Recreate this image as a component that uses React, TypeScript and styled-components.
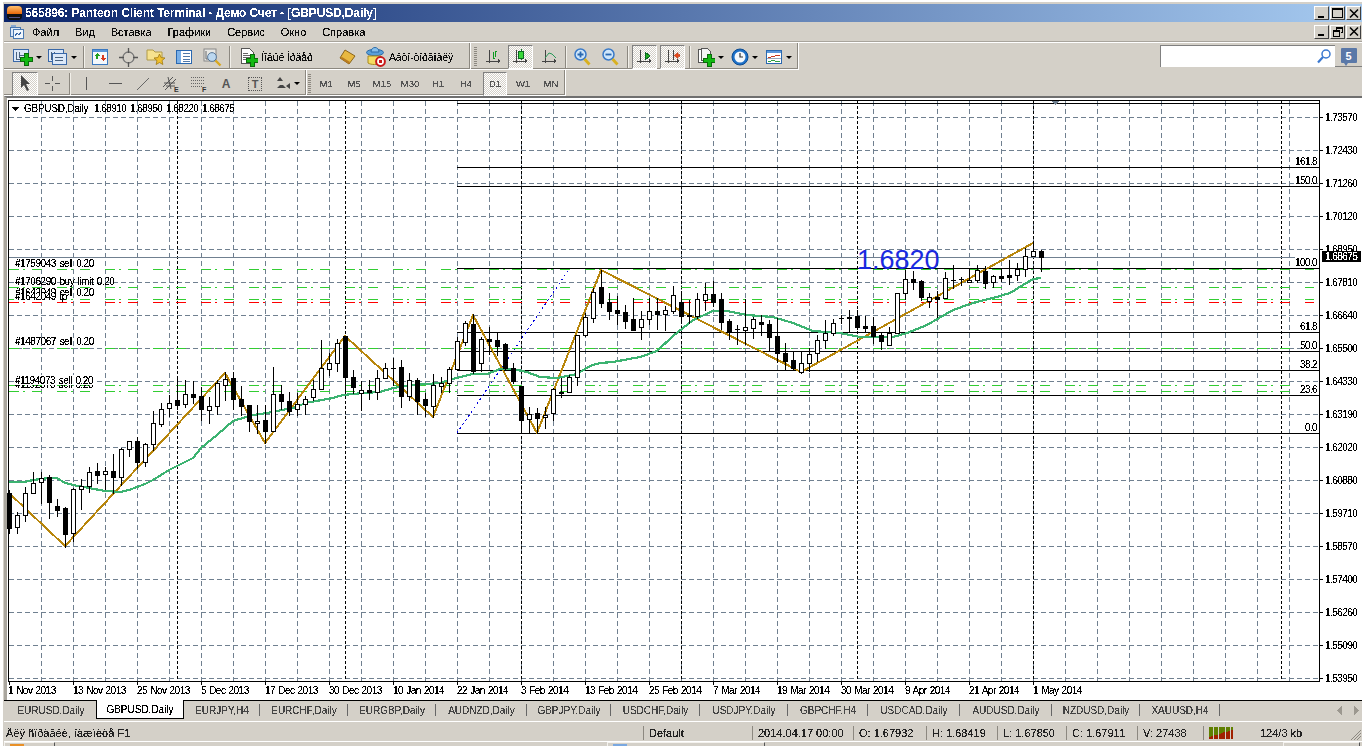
import React from "react";
import styled, { createGlobalStyle, css } from "styled-components";

const UI_FONT = `"Liberation Sans", Arial, sans-serif`;
const CHART_FONT = `"Liberation Sans", Arial, sans-serif`;
const crisp = css` filter: url(#crisp); `;

const Global = createGlobalStyle`
  html, body { margin: 0; padding: 0; background: #fff; width: 1368px; height: 746px; overflow: hidden; }
  * { box-sizing: border-box; }
`;

const Win = styled.div`
  margin: 2px 0 0 3px; width: 1359px; height: 744px; display: flex; flex-direction: column;
  background: #d4d0c8; border-left: 1px solid #d4d0c8; border-top: 2px solid #d4d0c8;
  font: 11px ${UI_FONT}; color: #000; overflow: hidden;
`;
const HiddenDefs = styled.svg` position: absolute; width: 0; height: 0; `;
const TitleBar = styled.div`
  height: 18px; flex: none; display: flex; align-items: center;
  background: linear-gradient(90deg, #0a246a, #a6caf0);
  color: #fff; font: bold 12px ${UI_FONT}; padding-left: 3px;
`;
const TitleText = styled.span` margin-left: 3px; white-space: nowrap; letter-spacing: -.12px; filter: url(#crispBold); `;
const WinBtns = styled.div` margin-left: auto; display: flex; gap: 1px; padding-right: 1px; `;
const WinBtn = styled.div`
  width: 15px; height: 14px; background: #d4d0c8; display: flex; align-items: center; justify-content: center;
  border-style: solid; border-width: 1px; border-color: #fff #404040 #404040 #fff;
`;
const MenuRow = styled.div`
  height: 20px; flex: none; display: flex; align-items: center; padding-left: 6px;
  border-bottom: 1px solid #a8a49c;
`;
const MenuItems = styled.div` display: flex; gap: 15.9px; margin-left: 8px; color: #111; ${crisp} `;
const MenuItem = styled.span``;
const Rows = styled.div` flex: none; border-top: 1px solid #fff; `;
const TRow = styled.div<{ $h: number }>`
  height: ${p => p.$h}px; display: flex; align-items: center; position: relative;
`;
const Band = styled.div<{ $w: number; $pl: number }>`
  width: ${p => p.$w}px; height: 100%; flex: none; display: flex; align-items: center; padding: 2px 0 0 ${p => p.$pl}px;
  border-right: 1px solid #fff; border-bottom: 1px solid #fff; box-shadow: inset -1px -1px 0 #8c8880;
`;
const activeCss = css`
  background: repeating-conic-gradient(#fff 0 25%, #d4d0c8 0 50%) 0 0 / 2px 2px;
  border-style: solid; border-width: 1px; border-color: #808080 #fff #fff #808080;
`;
const Tool = styled.div<{ $w: number; $ml?: number; $active?: boolean }>`
  width: ${p => p.$w}px; margin-left: ${p => p.$ml ?? 0}px; height: 24px; flex: none;
  display: flex; align-items: center; justify-content: center; gap: 3px;
  color: #111; white-space: nowrap;
  ${p => p.$active && activeCss}
`;
const TfLabel = styled.span` font: 9.5px ${UI_FONT}; color: #555; ${crisp} `;
const Caret = styled.i`
  width: 0; height: 0; border: 3px solid transparent; border-top: 3px solid #000; border-bottom: 0; display: block; flex: none;
`;
const Sep = styled.i<{ $ml: number; $mr: number }>`
  width: 2px; height: 22px; flex: none; margin: 0 ${p => p.$mr}px 0 ${p => p.$ml}px;
  border-left: 1px solid #8c8880; border-right: 1px solid #f2f0ea;
`;
const Grip = styled.i<{ $ml: number; $mr: number }>`
  width: 3px; height: 20px; flex: none; margin: 0 ${p => p.$mr}px 0 ${p => p.$ml}px;
  background: repeating-linear-gradient(180deg, #8c8880 0 1px, #d4d0c8 1px 2px);
`;
const GarbledLabel = styled.span` font: 10.5px ${UI_FONT}; letter-spacing: -.1px; ${crisp} `;
const Search = styled.div`
  position: absolute; right: 0; top: 2px; display: flex; width: 202px; height: 22px;
`;
const SearchField = styled.div`
  flex: 1; background: #fff; display: flex; align-items: center; justify-content: flex-end; padding-right: 4px;
  border-left: 1px solid #808080; border-top: 1px solid #808080;
`;
const SearchBtn = styled.div`
  width: 27px; display: flex; align-items: center; justify-content: center; border-bottom: 1px solid #808080;
`;
const ChartBox = styled.div`
  height: 604px; flex: none; display: flex; background: #fff; border-top: 2px solid #6f6f6f; border-left: 3px solid #aaa69e;
`;
const ChartSvg = styled.svg` display: block; background: #fff; `;
const CT = styled.text<{ $ls?: number; $ws?: number }>`
  font: 10px ${CHART_FONT}; fill: #000; letter-spacing: ${p => p.$ls ?? 0}px; word-spacing: ${p => p.$ws ?? 0}px; ${crisp}
`;
const BigLevel = styled.text` font: 27px ${UI_FONT}; fill: #1a2ae0; `;
const TabsRow = styled.div`
  height: 22px; flex: none; display: flex; padding-left: 2px; border-top: 1px solid #000; border-bottom: 1px solid #fff; position: relative;
`;
const Tab = styled.div<{ $w: number; $active?: boolean; $first?: boolean }>`
  width: ${p => p.$w}px; flex: none; display: flex; align-items: center; justify-content: center; font: 10px ${UI_FONT};
  color: #444; height: 18px; position: relative;
  ${p => p.$active ? css`
    background: #fff; color: #000; height: 19px; margin-top: -1px; padding-top: 1px;
    border-left: 1px solid #000; border-right: 1px solid #000; border-bottom: 1px solid #000;
  ` : css`
    &::after { content: ""; position: absolute; right: 0; top: 3px; height: 12px; width: 1px; background: ${p.$first ? "transparent" : "#666"}; }
  `}
`;
const TabLabel = styled.span` ${crisp} `;
const TabArrows = styled.div`
  position: absolute; right: 2px; top: 5px; display: flex; gap: 11px;
`;
const StatusRow = styled.div` height: 19px; flex: none; display: flex; align-items: center; padding-top: 3px; color: #222; `;
const Cell = styled.div<{ $w: number; $sep?: boolean }>`
  width: ${p => p.$w}px; flex: none; height: 14px; display: flex; align-items: center; white-space: nowrap; padding-left: ${p => p.$sep ? 5 : 2}px;
  ${p => p.$sep && "border-left: 1px solid #8c8880;"}
`;
const CellText = styled.span` ${crisp} `;
const Grow = styled.div` flex: 1; display: flex; justify-content: flex-end; align-self: flex-end; `;
const Taskbar = styled.div`
  flex: 1; display: flex; border-top: 1px solid #fff; align-items: stretch;
`;
const TaskBtn = styled.div<{ $w: number; $ml: number }>`
  width: ${p => p.$w}px; margin-left: ${p => p.$ml}px; flex: none; background: #d4d0c8; padding: 1px 0 0 5px;
  border-left: 1px solid #f4f2ee; border-top: 1px solid #f4f2ee; border-right: 1px solid #555;
`;
const TaskIcon = styled.i<{ $c: string }>` display: block; width: 14px; height: 4px; background: ${p => p.$c}; `;

/* ---------- icons ---------- */
const Svg: React.FC<{ w: number; h: number; children: React.ReactNode }> = ({ w, h, children }) => (
  <svg width={w} height={h} viewBox={`0 0 ${w} ${h}`} style={{ display: "block", flex: "none" }} shapeRendering="crispEdges">{children}</svg>
);
const Plus = ({ x, y }: { x: number; y: number }) => (
  <path d={`M${x + 4} ${y}h4v4h4v4h-4v4h-4v-4h-4v-4h4z`} fill="#12b812" stroke="#0a6a0a" />
);
const ChartWin = ({ x = 0, y = 0 }: { x?: number; y?: number }) => (
  <g transform={`translate(${x} ${y})`}>
    <rect x=".5" y=".5" width="15" height="12" fill="#dce8f8" stroke="#3a68a8" />
    <path d="M3 3v7h10M6 6h5M6 3v6" stroke="#48617f" fill="none" />
  </g>
);
const NewChart = () => <Svg w={20} h={18}><ChartWin y={1} /><Plus x={7} y={5} /></Svg>;
const Profiles = () => (
  <Svg w={20} h={18}>
    <ChartWin y={1} />
    <g transform="translate(4 5)"><rect x=".5" y=".5" width="14" height="11" fill="#dce8f8" stroke="#3a68a8" /><path d="M3 4h8M3 7h8" stroke="#48617f" /></g>
  </Svg>
);
const MarketWatch = () => (
  <Svg w={17} h={17}>
    <rect x=".5" y=".5" width="15" height="15" fill="#f4f8fc" stroke="#3a78c0" /><rect x="1" y="1" width="14" height="2" fill="#5a98dc" />
    <path d="M5 4l3 3h-2v3h-2v-3h-2z" fill="#20a020" /><path d="M11 12l3-3h-2v-3h-2v3h-2z" fill="#d83a20" />
  </Svg>
);
const Navigator = () => (
  <svg width="19" height="19" viewBox="0 0 19 19" style={{ display: "block" }}>
    <circle cx="9.5" cy="9.5" r="5.5" fill="none" stroke="#777" strokeWidth="1.3" />
    <path d="M9.5 0v5M9.5 14v5M0 9.5h5M14 9.5h5" stroke="#555" strokeWidth="1.3" />
  </svg>
);
const FolderStar = () => (
  <svg width="20" height="18" viewBox="0 0 20 18" style={{ display: "block" }}>
    <path d="M1 2h6l2 2h7v8H1z" fill="#f6e28e" stroke="#b09a48" />
    <path d="M13.5 6l1.6 3.6 3.9.4-3 2.6.9 3.9-3.4-2-3.4 2 .9-3.9-3-2.6 3.9-.4z" fill="#f0c030" stroke="#a07810" strokeWidth=".8" />
  </svg>
);
const Terminal = () => (
  <Svg w={17} h={15}>
    <rect x=".5" y=".5" width="15" height="13" fill="#fff" stroke="#2a68b0" /><rect x="1" y="1" width="4" height="12" fill="#7ab0e8" />
    <path d="M7 3h7M7 6h7M7 9h7M7 11h7" stroke="#5078a8" />
  </Svg>
);
const Tester = () => (
  <svg width="19" height="19" viewBox="0 0 19 19" style={{ display: "block" }}>
    <rect x="1" y="1" width="12" height="12" fill="#e8e8e4" stroke="#888" />
    <path d="M3 3v8h8" stroke="#666" fill="none" />
    <circle cx="9" cy="9" r="4.4" fill="#bcd8f0" stroke="#5a7898" />
    <path d="M12.5 12.5l5 5" stroke="#d8a820" strokeWidth="2.4" />
  </svg>
);
const NewOrder = () => (
  <Svg w={18} h={19}>
    <path d="M1.5 .5h8l4 4v11h-12z" fill="#fff" stroke="#555" />
    <path d="M3 5h5M3 7h8M3 9h8M3 11h5" stroke="#666" />
    <Plus x={6} y={6} />
  </Svg>
);
const MetaEditor = () => (
  <svg width="17" height="16" viewBox="0 0 17 16" style={{ display: "block" }}>
    <path d="M6 1l10 6-6 8-9-6z" fill="#e8b840" stroke="#8a6418" />
    <path d="M1 9l9 6 1-2-8-5z" fill="#b87a20" />
  </svg>
);
const AutoTrade = () => (
  <svg width="20" height="20" viewBox="0 0 20 20" style={{ display: "block" }}>
    <ellipse cx="9" cy="5.5" rx="8.5" ry="3.2" fill="#5aa0d8" stroke="#2a6aa8" />
    <path d="M5 5c0-6 8-6 8 0z" fill="#86c0ec" stroke="#2a6aa8" />
    <path d="M2 9h13v7c-3 2-10 2-13 0z" fill="#f4dc60" stroke="#a88a20" />
    <circle cx="14.5" cy="14.5" r="4.4" fill="#fff" stroke="#c81818" strokeWidth="2" />
    <rect x="13" y="13" width="3" height="3" fill="#c81818" />
  </svg>
);
const Axes = () => <path d="M3 1v13M0 12h14M14 12l-2-1.500M14 12l-2 1.500" stroke="#444" fill="none" />;
const BarIcon = () => (
  <Svg w={15} h={16}><Axes /><path d="M7 3v7M7 9h2M9 2v6M9 2h2" stroke="#0a9a20" fill="none" /></Svg>
);
const CandleIcon = () => (
  <Svg w={15} h={16}><Axes /><path d="M8 0v11" stroke="#0a7a20" /><rect x="5.500" y="2.500" width="5" height="7" fill="#38d838" stroke="#0a6a20" /></Svg>
);
const LineIcon = () => (
  <svg width="15" height="16" viewBox="0 0 15 16" style={{ display: "block" }}><g shapeRendering="crispEdges"><Axes /></g><path d="M3 9L7 4l3 1 4 4" stroke="#2a9a5a" fill="none" /></svg>
);
const Magnifier = ({ plus }: { plus?: boolean }) => (
  <svg width="17" height="18" viewBox="0 0 17 18" style={{ display: "block" }}>
    <circle cx="6.500" cy="6.500" r="5.500" fill="#cfe6fa" stroke="#3a7ac8" strokeWidth="1.500" />
    <path d={plus ? "M3.500 6.500h6M6.500 3.500v6" : "M3.500 6.500h6"} stroke="#2a68b0" strokeWidth="1.800" />
    <path d="M10.500 11l5 5.500" stroke="#d8b020" strokeWidth="2.800" />
  </svg>
);
const ShiftIcon = () => (
  <Svg w={15} h={16}><Axes /><path d="M8 3l5 4-5 4z" fill="#20b020" stroke="#0a6a20" /></Svg>
);
const ScrollIcon = () => (
  <svg width="15" height="16" viewBox="0 0 15 16" style={{ display: "block" }}><g shapeRendering="crispEdges"><Axes /><path d="M8 1v10" stroke="#444" /></g><path d="M9 6.500l4-3v2h2v2h-2v2z" fill="#e84818" stroke="#b03010" strokeWidth=".5" /></svg>
);
const TemplateIcon = () => (
  <Svg w={18} h={19}>
    <path d="M1.500 1.500h7l2 2v11h-9z" fill="#fff" stroke="#555" /><path d="M4.500 .5h6l3 3v9h-9z" fill="#f4f4f4" stroke="#555" />
    <Plus x={6} y={6} />
  </Svg>
);
const ClockIcon = () => (
  <svg width="18" height="18" viewBox="0 0 18 18" style={{ display: "block" }}>
    <circle cx="9" cy="9" r="8" fill="#1c70c8" stroke="#0c4a90" />
    <circle cx="9" cy="9" r="5.500" fill="#f4f8fc" />
    <path d="M9 5v4h3" stroke="#333" strokeWidth="1.200" fill="none" />
  </svg>
);
const ListIcon = () => (
  <Svg w={17} h={15}>
    <rect x=".5" y=".5" width="15" height="13" fill="#fff" stroke="#2a68b0" /><rect x="1" y="1" width="14" height="2" fill="#5a98dc" />
    <path d="M2 7h3M5 6h4M9 5h5" stroke="#c83a20" /><path d="M2 11h3M5 10h4M9 11h5" stroke="#30a040" /><path d="M1 8h14" stroke="#9ab" />
  </Svg>
);
const CursorIcon = () => (
  <svg width="11" height="17" viewBox="0 0 11 17" style={{ display: "block" }}><path d="M1 0v13l3-3 3 6 2-1-3-6h4z" fill="#444" /></svg>
);
const CrossIcon = () => <Svg w={15} h={15}><path d="M7.500 0v5M7.500 10v5M0 7.500h5M10 7.500h5" stroke="#555" /></Svg>;
const VLine = () => <Svg w={3} h={13}><path d="M1.500 0v13" stroke="#555" /></Svg>;
const HLine = () => <Svg w={13} h={3}><path d="M0 1.500h13" stroke="#555" /></Svg>;
const Trend = () => <svg width="14" height="14" viewBox="0 0 14 14" style={{ display: "block" }}><path d="M1 13L13 1" stroke="#666" /></svg>;
const ChannelIcon = () => (
  <svg width="16" height="16" viewBox="0 0 16 16" style={{ display: "block" }}>
    <path d="M0 11L10 1M2 14L13 3M5 1l3 12M1 7h11M3 10h9" stroke="#555" fill="none" />
    <text x="11" y="16" fontFamily="Liberation Sans" fontWeight="bold" fontSize="7" fill="#333">E</text>
  </svg>
);
const FiboIcon = () => (
  <svg width="16" height="16" viewBox="0 0 16 16" style={{ display: "block" }} shapeRendering="crispEdges">
    <path d="M0 1.500h14M0 4.500h14M0 7.500h14M0 10.500h11" stroke="#666" strokeDasharray="1 1" />
    <text x="11" y="16" fontFamily="Liberation Sans" fontWeight="bold" fontSize="7" fill="#333">F</text>
  </svg>
);
const BigA = styled.span` font: bold 12px ${UI_FONT}; color: #555; `;
const BoxT = styled.span`
  width: 14px; height: 14px; border: 1px dotted #555; display: flex; align-items: center; justify-content: center;
  font: bold 11px ${UI_FONT}; color: #555;
`;
const ArrowsIcon = () => (
  <svg width="15" height="13" viewBox="0 0 15 13" style={{ display: "block" }}>
    <path d="M4 0l3 4H1zM10 9l4-3v6zM4 8h3l3 3H1" fill="#444" />
  </svg>
);
const TitleLogo = () => (
  <svg width="15" height="16" viewBox="0 0 15 16" style={{ display: "block" }}>
    <defs><linearGradient id="tl" x1="0" y1="0" x2="0" y2="1"><stop offset="0" stopColor="#ffc070" /><stop offset="1" stopColor="#e86808" /></linearGradient></defs>
    <rect x="0" y="1" width="15" height="14" rx="4" fill="#111" /><path d="M0 5a4 4 0 014-4h7a4 4 0 014 4v4H0z" fill="url(#tl)" />
    <rect x="2" y="12" width="11" height="1" fill="#558" />
  </svg>
);
const MenuLogo = () => (
  <Svg w={14} h={14}>
    <rect x=".5" y="2.500" width="10" height="9" fill="#dce8f8" stroke="#4a78b0" />
    <rect x="3.500" y="4.500" width="10" height="9" fill="#f0f6fc" stroke="#4a78b0" />
    <path d="M5 11l2-3 2 2 2-3" stroke="#3a68a8" fill="none" /><rect x="1" y="0" width="5" height="2" fill="#88a8d0" />
  </Svg>
);
const GMin = () => <Svg w={9} h={9}><path d="M1 7h6v2H1z" fill="#000" /></Svg>;
const GMax = () => <Svg w={11} h={10}><path d="M.5 .5h10v9H.5zM1 1.500h9" stroke="#000" fill="none" /></Svg>;
const GClose = () => <svg width="10" height="9" viewBox="0 0 10 9" style={{ display: "block" }}><path d="M1 .5l8 8M9 .5l-8 8" stroke="#000" strokeWidth="1.500" /></svg>;
const GRestore = () => <Svg w={10} h={10}><path d="M3.500 2.500v-2h6v5h-2M.5 3.500h6v6h-6zM.5 4.500h6M3.500 1.500h6" stroke="#000" fill="none" /></Svg>;
const SearchGlass = () => (
  <svg width="14" height="15" viewBox="0 0 14 15" style={{ display: "block" }}>
    <circle cx="9" cy="5" r="4" fill="#fff" stroke="#3a78d0" strokeWidth="1.500" /><path d="M6 8l-5 5.500" stroke="#3a78d0" strokeWidth="2.200" />
  </svg>
);
const Bubble = styled.div`
  width: 16px; height: 15px; background: #5a78a8; color: #fff; font: bold 11px ${UI_FONT};
  display: flex; align-items: center; justify-content: center; position: relative; border-radius: 1px;
  &::after { content: ""; position: absolute; left: 3px; bottom: -3px; border: 2px solid transparent; border-top: 3px solid #5a78a8; border-bottom: 0; }
`;
const LoadBars = () => (
  <Svg w={24} h={12}>
    {Array.from({ length: 10 }, (_, i) => {
      const x = Math.round(i * 2.4);
      const red = 1 + Math.round(i * .75);
      return (
        <g key={i}>
          <rect x={x} y={0} width={2} height={11 - red} fill="#5f7f00" />
          <rect x={x} y={11 - red} width={2} height={red + 1} fill="#a02000" />
        </g>
      );
    })}
  </Svg>
);

/* ---------- chart data (page pixel coordinates) ---------- */
// [high, low, bodyTop, bodyBottom, white?]
const C: number[][] = [
  [490,533,493,528,0],[512,533,515,527,1],[487,521,493,515,1],[472,493,483,493,1],[472,503,478,482,1],[475,518,477,502,0],[499,516,506,510,0],[507,547,508,534,0],
  [488,541,489,533,1],[479,509,486,489,1],[467,492,472,486,1],[463,483,471,475,0],[467,489,471,474,1],[454,493,471,477,0],[448,485,449,477,1],[441,456,441,449,1],
  [437,468,441,462,0],[443,466,444,462,1],[411,450,423,444,1],[403,426,409,424,1],[395,416,403,408,1],[376,409,400,405,0],[380,407,394,404,1],[381,403,394,397,0],
  [387,420,396,409,0],[397,423,406,410,1],[380,414,383,406,1],[372,400,379,385,1],[372,409,378,399,0],[386,415,399,406,0],[405,431,405,421,0],[405,433,421,423,1],
  [405,443,420,431,0],[367,431,394,431,1],[385,409,394,401,0],[392,415,401,411,0],[393,415,404,409,1],[396,414,399,404,1],[380,400,389,397,1],[340,389,368,389,1],
  [353,375,363,369,1],[339,371,343,363,1],[336,392,336,377,0],[370,393,377,387,0],[381,410,390,393,1],[380,399,390,392,0],[370,399,378,392,1],[363,378,368,378,1],
  [358,385,368,368,0],[360,407,367,396,0],[373,400,380,396,1],[378,414,380,401,0],[393,416,399,405,0],[374,417,385,406,1],[377,392,383,386,1],[367,392,369,383,1],
  [337,370,341,369,1],[321,345,323,342,1],[314,373,324,371,0],[337,371,339,363,1],[327,354,339,341,0],[333,355,340,346,0],[343,369,344,368,0],[363,383,368,381,0],
  [386,433,386,420,0],[407,433,414,419,1],[408,433,413,418,0],[407,428,415,417,1],[388,420,389,413,1],[378,397,392,393,0],[375,392,377,392,1],[335,385,335,377,1],
  [313,336,317,335,1],[288,322,292,318,1],[270,307,287,303,0],[293,319,302,311,0],[296,324,310,313,0],[305,328,312,321,0],[298,330,319,330,0],[311,339,319,327,1],
  [298,324,311,319,1],[298,329,311,314,0],[306,330,310,314,1],[286,313,295,311,1],[292,320,302,316,0],[300,323,315,316,0],[293,318,299,316,1],[283,310,294,300,1],
  [281,306,294,302,0],[293,329,299,322,0],[319,339,321,331,0],[325,344,329,329,0],[299,344,327,330,1],[317,338,319,328,1],[315,335,322,324,0],[320,350,324,337,0],
  [318,362,336,353,0],[343,369,353,361,0],[352,370,360,368,0],[352,373,363,372,1],[348,371,354,363,1],[335,361,340,353,1],[320,348,333,340,1],[319,335,323,333,1],
  [315,323,318,318,0],[310,332,317,318,0],[310,329,316,327,0],[316,332,326,328,0],[317,343,326,336,0],[333,349,335,341,0],[327,345,333,345,1],[293,333,293,333,1],
  [270,299,279,293,1],[271,289,279,282,0],[280,300,281,297,0],[293,307,297,301,1],[291,317,297,299,0],[272,298,278,298,1],[265,288,280,280,0],[277,285,279,279,0],
  [269,282,280,282,1],[265,282,270,280,1],[266,288,271,283,0],[275,287,276,282,1],[268,281,276,278,0],[260,284,275,277,0],[263,280,269,275,1],[248,276,256,269,1],
  [243,256,251,256,1],[250,271,251,257,0],
];
const ZIG = "9,493 65,546 225,373 265,443 345,336 433,417 473,315 537,433 601,270 801,372 1033,243";
const MA = "9,482 25,482 33,480 49,478 57,478 65,483 73,485 89,488 105,491 121,492 129,490 145,484 153,480 169,470 185,462 193,458 201,448 217,435 233,421 253,415 267,413 297,407 305,403 333,398 343,395 363,393 380,392 393,388 413,385 440,383 460,377 473,374 487,374 500,369 513,369 527,372 540,377 557,378 577,374 590,366 600,363 613,362 640,357 657,351 673,336 693,320 713,311 727,311 747,315 773,317 793,323 813,331 840,333 860,337 893,337 907,333 927,325 953,310 973,303 993,298 1010,293 1023,285 1033,279 1041,278";
const PRICES = ["1.73570","1.72430","1.71260","1.70120","1.68950","1.67810","1.66640","1.65500","1.64330","1.63190","1.62020","1.60880","1.59710","1.58570","1.57400","1.56260","1.55090","1.53950"];
const DATES = ["1 Nov 2013","13 Nov 2013","25 Nov 2013","5 Dec 2013","17 Dec 2013","30 Dec 2013","10 Jan 2014","22 Jan 2014","3 Feb 2014","13 Feb 2014","25 Feb 2014","7 Mar 2014","19 Mar 2014","30 Mar 2014","9 Apr 2014","21 Apr 2014","1 May 2014"];
const SEPS = [177, 345, 521, 681, 857, 1033, 1281];
const FIBS: [number, string, number][] = [[167,"161.8",165],[186,"150.0",184],[268,"100.0",266],[332,"61.8",330],[351,"50.0",349],[370,"38.2",368],[395,"23.6",393],[433,"0.0",431]];
const ORDERS: [number, string, number][] = [[269,"#32cd32",1314],[287,"#32cd32",1314],[299,"#32cd32",1314],[302,"#ff0000",1314],[348,"#32cd32",1298],[385,"#32cd32",1298],[391,"#32cd32",1298]];
const LEFT: [string, number][] = [["#1759043 sell 0.20",267],["#1706290 buy limit 0.20",285],["#1642049 sell 0.20",296],["#1487067 sell 0.20",345],["#1192370 sell 0.20",388]];
const HEAD: [string, number, number][] = [["GBPUSD,Daily",24,-.25],["1.68910",94,-.55],["1.68950",130,-.55],["1.68220",166,-.55],["1.68675",202,-.55]];

const Chart = () => {
  const gridY = PRICES.map((_, i) => 117 + i * 33);
  const gridX = Array.from({ length: 41 }, (_, i) => 41 + i * 32).filter(x => x < 1319);
  return (
    <ChartSvg width={1355} height={602} viewBox="7 98 1355 602">
      <g shapeRendering="crispEdges">
        {gridY.map(y => <line key={y} x1={9} x2={1319} y1={y + .5} y2={y + .5} stroke="#708090" strokeDasharray="5 3" />)}
        {gridX.map(x => <line key={x} x1={x + .5} x2={x + .5} y1={101} y2={681} stroke="#708090" strokeDasharray="5 3" />)}
        {SEPS.map(x => <line key={x} x1={x + .5} x2={x + .5} y1={101} y2={681} stroke="#000" strokeDasharray="3 2" />)}
        <line x1={9} x2={1295} y1={257.5} y2={257.5} stroke="#708090" />
        {ORDERS.map(([y, c, x2]) => <line key={y} x1={9} x2={x2} y1={y + .5} y2={y + .5} stroke={c} strokeDasharray="10 4 2 7 10 15" />)}
        <line x1={457} x2={1319} y1={103.5} y2={103.5} stroke="#000" />
        {FIBS.map(([y]) => <line key={y} x1={457} x2={1319} y1={y + .5} y2={y + .5} stroke="#000" />)}
        <polyline points="457,433 570,268" fill="none" stroke="#0000e0" strokeDasharray="2 3" />
        <polyline points={ZIG} fill="none" stroke="#b8860b" strokeWidth={2} />
        <polyline points={MA} fill="none" stroke="#3cb371" strokeWidth={2.2} />
        {C.map(([hi, lo, t, b, white], i) => {
          const x = 9 + i * 8;
          return (
            <g key={i}>
              <line x1={x + .5} x2={x + .5} y1={hi} y2={lo + 1} stroke="#000" />
              {b - t < 1
                ? <line x1={x - 2} x2={x + 3} y1={t + .5} y2={t + .5} stroke="#000" />
                : white
                  ? <rect x={x - 1.5} y={t + .5} width={4} height={b - t} fill="#fff" stroke="#000" />
                  : <rect x={x - 2} y={t} width={5} height={b - t + 1} fill="#000" />}
            </g>
          );
        })}
        {/* frame and axes */}
        <line x1={8} x2={1320} y1={100.5} y2={100.5} stroke="#000" />
        <line x1={8.5} x2={8.5} y1={100} y2={682} stroke="#000" />
        <line x1={8} x2={1320} y1={681.5} y2={681.5} stroke="#000" />
        <line x1={1319.5} x2={1319.5} y1={100} y2={682} stroke="#000" />
        {gridY.map(y => <line key={y} x1={1320} x2={1323} y1={y + .5} y2={y + .5} stroke="#000" />)}
        {DATES.map((_, i) => <line key={i} x1={9.5 + i * 64} x2={9.5 + i * 64} y1={682} y2={685} stroke="#000" />)}
        <path d="M1052 101h7l-3.500 4z" fill="#708090" />
        <path d="M12 107h7l-3.500 4z" fill="#000" />
        {[[1294,258,25,10],[1306,322,13,9],[1306,341,13,9],[1306,360,13,9],[1299,385,20,9]].map(([x, y, w, h], i) => <rect key={i} x={x} y={y} width={w} height={h} fill="#fff" />)}
      </g>
      {HEAD.map(([t, x, ls], i) => <CT key={i} x={x} y={112} $ls={ls}>{t}</CT>)}
      <BigLevel x={857} y={269}>1.6820</BigLevel>
      {LEFT.map(([t, y]) => <CT key={t} x={15} y={y} $ls={-.45} $ws={1.2}>{t}</CT>)}
      <rect x={14} y={293} width={52} height={9} fill="#fff" shapeRendering="crispEdges" />
      <CT x={15} y={300} $ls={-.45} $ws={1.2}>#1642049 tp</CT>
      <rect x={14} y={375} width={81} height={10} fill="#fff" shapeRendering="crispEdges" />
      <CT x={15} y={384} $ls={-.45} $ws={1.2}>#1194073 sell 0.20</CT>
      {FIBS.map(([, t, y]) => <CT key={t} x={1317} y={y} textAnchor="end" $ls={-.6}>{t}</CT>)}
      {PRICES.map((p, i) => <CT key={p} x={1325} y={120.500 + i * 33} $ls={-.55}>{p}</CT>)}
      {DATES.map((d, i) => <CT key={d} x={i === 0 ? 8 : 9 + i * 64} y={694} $ls={-.5} $ws={.8}>{d}</CT>)}
      <rect x={1322} y={251} width={39} height={11} fill="#000" shapeRendering="crispEdges" />
      <CT x={1325} y={259.500} $ls={-.55} style={{ fill: "#fff" }}>1.68675</CT>
    </ChartSvg>
  );
};

const TABS: [string, number][] = [["EURUSD,Daily",90],["GBPUSD,Daily",88],["EURJPY,H4",76],["EURCHF,Daily",88],["EURGBP,Daily",88],["AUDNZD,Daily",91],["GBPJPY,Daily",84],["USDCHF,Daily",89],["USDJPY,Daily",88],["GBPCHF,H4",80],["USDCAD,Daily",92],["AUDUSD,Daily",92],["NZDUSD,Daily",88],["XAUUSD,H4",80]];
const MENU = ["Файл","Вид","Вставка","Графики","Сервис","Окно","Справка"];
const TF: [string, number, number, boolean?][] = [["M1",28,0],["M5",28,0],["M15",28,0],["M30",28,0],["H1",28,0],["H4",28,0],["D1",24,3,true],["W1",28,2],["MN",28,0]];
const STATUS: [string, number][] = [["Default",109],["2014.04.17 00:00",101],["O: 1.67932",73],["H: 1.68419",71],["L: 1.67850",69],["C: 1.67911",71],["V: 27438",66]];

export default function App() {
  return (
    <>
      <Global />
      <HiddenDefs>
        <filter id="crisp" x="-5%" y="-20%" width="110%" height="140%">
          <feComponentTransfer><feFuncA type="discrete" tableValues="0 0 1 1 1" /></feComponentTransfer>
        </filter>
        <filter id="crispBold" x="-5%" y="-20%" width="110%" height="140%">
          <feComponentTransfer><feFuncA type="discrete" tableValues="0 0 1 1" /></feComponentTransfer>
        </filter>
      </HiddenDefs>
      <Win>
        <TitleBar>
          <TitleLogo />
          <TitleText>565896: Panteon Client Terminal - Демо Счет - [GBPUSD,Daily]</TitleText>
          <WinBtns>
            <WinBtn><GMin /></WinBtn><WinBtn><GMax /></WinBtn><WinBtn><GClose /></WinBtn>
          </WinBtns>
        </TitleBar>
        <MenuRow>
          <MenuLogo />
          <MenuItems>{MENU.map(m => <MenuItem key={m}>{m}</MenuItem>)}</MenuItems>
          <WinBtns>
            <WinBtn><GMin /></WinBtn><WinBtn><GRestore /></WinBtn><WinBtn><GClose /></WinBtn>
          </WinBtns>
        </MenuRow>
        <Rows>
          <TRow $h={27}>
            <Band $w={467} $pl={6}>
              <Tool $w={35}><NewChart /><Caret /></Tool>
              <Tool $w={35}><Profiles /><Caret /></Tool>
              <Sep $ml={3} $mr={1} />
              <Tool $w={28}><MarketWatch /></Tool>
              <Tool $w={28}><Navigator /></Tool>
              <Tool $w={28}><FolderStar /></Tool>
              <Tool $w={28}><Terminal /></Tool>
              <Tool $w={28}><Tester /></Tool>
              <Sep $ml={3} $mr={2} />
              <Tool $w={87}><NewOrder /><GarbledLabel>Íîâûé Îðäåð</GarbledLabel></Tool>
              <Tool $w={30} $ml={12}><MetaEditor /></Tool>
              <Tool $w={95}><AutoTrade /><GarbledLabel>Àâòî-òîðãîâëÿ</GarbledLabel></Tool>
            </Band>
            <Band $w={328} $pl={3}>
              <Grip $ml={0} $mr={4} />
              <Tool $w={25}><BarIcon /></Tool>
              <Tool $w={25} $ml={2} $active><CandleIcon /></Tool>
              <Tool $w={25} $ml={4}><LineIcon /></Tool>
              <Sep $ml={3} $mr={1} />
              <Tool $w={28}><Magnifier plus /></Tool>
              <Tool $w={28}><Magnifier /></Tool>
              <Sep $ml={3} $mr={3} />
              <Tool $w={25} $active><ShiftIcon /></Tool>
              <Tool $w={25} $ml={3} $active><ScrollIcon /></Tool>
              <Sep $ml={4} $mr={0} />
              <Tool $w={39}><TemplateIcon /><Caret /></Tool>
              <Tool $w={29}><ClockIcon /><Caret /></Tool>
              <Tool $w={39}><ListIcon /><Caret /></Tool>
            </Band>
            <Search>
              <SearchField><SearchGlass /></SearchField>
              <SearchBtn><Bubble>5</Bubble></SearchBtn>
            </Search>
          </TRow>
          <TRow $h={26}>
            <Band $w={303} $pl={8}>
              <Tool $w={26} $active><CursorIcon /></Tool>
              <Tool $w={28}><CrossIcon /></Tool>
              <Sep $ml={3} $mr={1} />
              <Tool $w={28}><VLine /></Tool>
              <Tool $w={28} $ml={1}><HLine /></Tool>
              <Tool $w={28}><Trend /></Tool>
              <Tool $w={27}><ChannelIcon /></Tool>
              <Tool $w={30}><FiboIcon /></Tool>
              <Tool $w={24}><BigA>A</BigA></Tool>
              <Tool $w={34}><BoxT>T</BoxT></Tool>
              <Tool $w={32}><ArrowsIcon /><Caret /></Tool>
            </Band>
            <Band $w={259} $pl={1}>
              <Grip $ml={0} $mr={1} />
              {TF.map(([t, w, ml, a]) => <Tool key={t} $w={w} $ml={ml} $active={a}><TfLabel>{t}</TfLabel></Tool>)}
            </Band>
          </TRow>
        </Rows>
        <ChartBox><Chart /></ChartBox>
        <TabsRow>
          {TABS.map(([t, w], i) => <Tab key={t} $w={w} $active={i === 1} $first={i === 0}><TabLabel>{t}</TabLabel></Tab>)}
          <TabArrows>
            <Svg w={6} h={9}><path d="M5 0v9L0 4.500z" fill="#9c9890" /></Svg>
            <Svg w={6} h={9}><path d="M0 0v9l5-4.500z" fill="#9c9890" /></Svg>
          </TabArrows>
        </TabsRow>
        <StatusRow>
          <Cell $w={639}><CellText>Äëÿ ñïðàâêè, íàæìèòå F1</CellText></Cell>
          {STATUS.map(([t, w]) => <Cell key={t} $w={w} $sep><CellText>{t}</CellText></Cell>)}
          <Cell $w={55} $sep><LoadBars /></Cell>
          <Cell $w={60}><CellText>124/3 kb</CellText></Cell>
          <Grow><Svg w={11} h={11}><path d="M0 10L10 0M3 10l7-7M6 10l4-4" stroke="#8c8880" fill="none" /></Svg></Grow>
        </StatusRow>
        <Taskbar>
          <TaskBtn $w={51} $ml={0}><TaskIcon $c="#e89028" /></TaskBtn>
          <TaskBtn $w={158} $ml={552}><TaskIcon $c="#7aa8e0" /></TaskBtn>
          <TaskBtn $w={77} $ml={518} />
        </Taskbar>
      </Win>
    </>
  );
}
